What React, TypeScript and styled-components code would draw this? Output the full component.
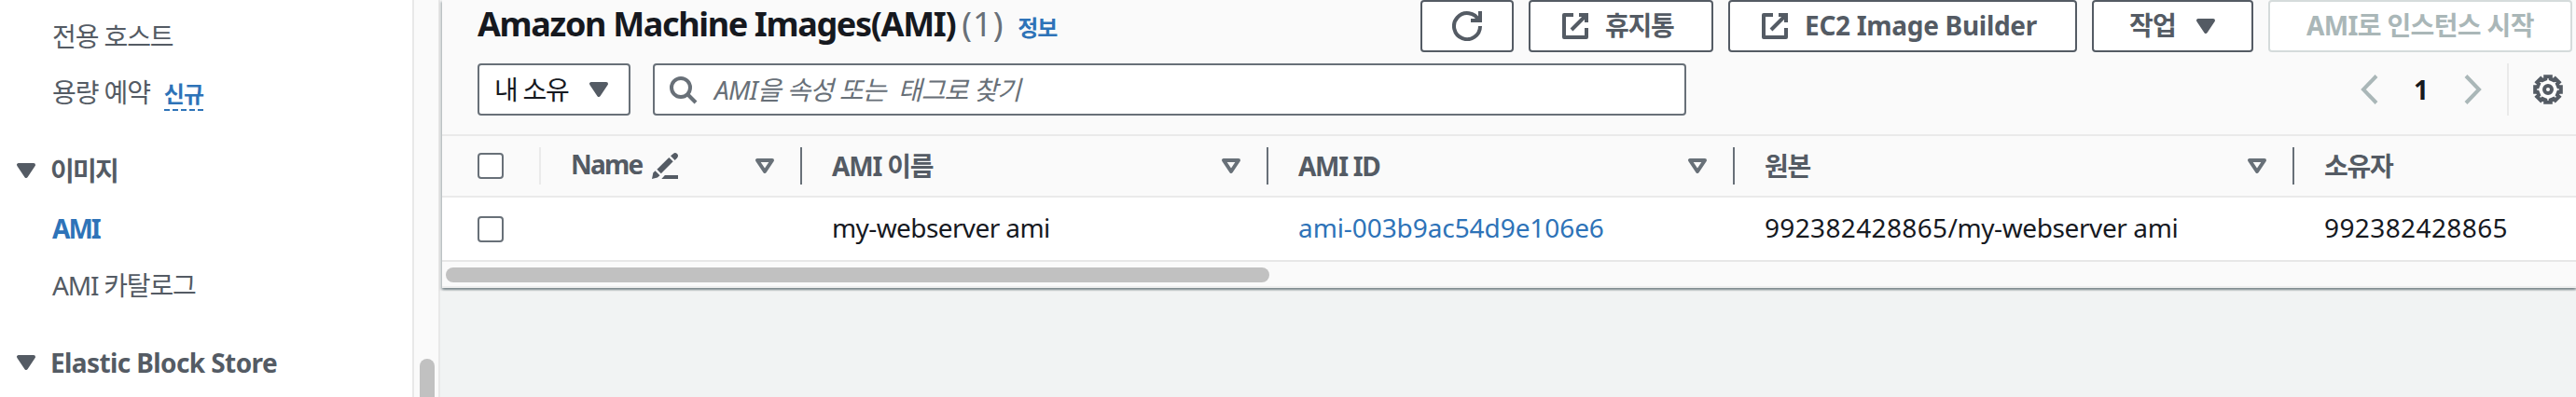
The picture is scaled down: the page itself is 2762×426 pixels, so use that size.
import React from "react";
import styled, { createGlobalStyle } from "styled-components";

const ink = "#16191f";
const slate = "#545b64";
const muted = "#687078";
const link = "#2e73b8";
const hairline = "#eaeaea";
const disabled = "#aab7b8";

const GlobalStyle = createGlobalStyle`
  * { box-sizing: border-box; }
  body {
    margin: 0;
    overflow: hidden;
    background: #f1f3f3;
    color: ${ink};
    font-family: "Noto Sans", "Noto Sans CJK KR", sans-serif;
    font-size: 28px;
  }
  svg { display: block; flex: none; }
`;

const Text = styled.span<{ $track?: number }>`
  white-space: pre;
  letter-spacing: ${(p) => p.$track ?? 0}px;
`;

const Page = styled.div`
  display: flex;
  width: 2762px;
  height: 426px;
  overflow: hidden;
`;

/* Side navigation */
const Sidebar = styled.nav`
  flex: none;
  width: 442px;
  padding-top: 8px;
  background: #fff;
  color: ${slate};
`;

const NavItem = styled.div<{ $active?: boolean }>`
  display: flex;
  height: 60px;
  padding-left: 56px;
  line-height: ${(p) => (p.$active ? 60 : 62)}px;
  font-weight: ${(p) => (p.$active ? 700 : 400)};
  color: ${(p) => (p.$active ? link : slate)};
`;

const NavSection = styled.div<{ $gap: number }>`
  display: flex;
  align-items: center;
  gap: 10px;
  height: 64px;
  margin-top: ${(p) => p.$gap}px;
  padding-left: 12px;
  line-height: 64px;
  font-weight: 700;
`;

const NewTag = styled.span`
  align-self: flex-start;
  width: 42px;
  height: 37px;
  margin: 14px 0 0 15px;
  line-height: 38px;
  font-size: 24px;
  font-weight: 700;
  color: ${link};
`;

const DashRule = styled.div`
  height: 2px;
  margin-top: -3px;
  background: repeating-linear-gradient(90deg, ${link} 0 6px, transparent 6px 9px);
`;

const TagLabel = styled(Text)`
  display: block;
`;

const NavScrollbar = styled.div`
  flex: none;
  width: 30px;
  padding: 385px 4px 0 6px;
  background: #fafafa;
  border: solid #e8e8e8;
  border-width: 0 2px;
  overflow: hidden;
`;

const NavThumb = styled.div`
  width: 16px;
  height: 80px;
  border-radius: 8px;
  background: #c1c1c1;
`;

/* Table card */
const Main = styled.main`
  flex: 1;
  min-width: 0;
  padding-left: 2px;
`;

const Card = styled.section`
  height: 309px;
  background: #fafafa;
  box-shadow: 0 2px 2px 0 rgba(0, 28, 36, 0.3), 2px 2px 2px 0 rgba(0, 28, 36, 0.15),
    -2px 2px 2px 0 rgba(0, 28, 36, 0.15);
`;

const Header = styled.header`
  height: 146px;
  padding: 0 4px 0 38px;
  border-bottom: 2px solid ${hairline};
`;

const TitleRow = styled.div`
  display: flex;
  justify-content: space-between;
  height: 56px;
`;

const Title = styled.h2`
  display: flex;
  align-items: baseline;
  height: 52px;
  margin: 0;
  font-size: 36px;
  line-height: 51px;
  font-weight: 700;
`;

const Count = styled.span`
  width: 67px;
  padding-left: 7px;
  font-weight: 400;
  letter-spacing: 1px;
  color: ${muted};
`;

const InfoLink = styled.a`
  font-size: 24px;
  letter-spacing: -1px;
  color: ${link};
`;

const Actions = styled.div`
  display: flex;
  gap: 16px;
`;

const Button = styled.button<{ $width: number; $pad?: number; $off?: boolean }>`
  display: flex;
  align-items: center;
  gap: 16px;
  width: ${(p) => p.$width}px;
  height: 56px;
  padding: 0 0 0 ${(p) => p.$pad ?? 32}px;
  border: 2px solid ${(p) => (p.$off ? "#d5dbdb" : slate)};
  border-radius: 4px;
  background: #fff;
  color: ${(p) => (p.$off ? disabled : slate)};
  font: inherit;
  font-weight: 700;
  line-height: 50px;
`;

const ButtonLabel = styled(Text)`
  height: 52px;
  line-height: 51px;
`;

const FilterRow = styled.div`
  display: flex;
  gap: 24px;
  height: 56px;
  margin-top: 12px;
`;

const Field = styled.div<{ $width: number }>`
  display: flex;
  align-items: center;
  width: ${(p) => p.$width}px;
  padding: 0 14px 0 16px;
  border: 2px solid ${muted};
  border-radius: 4px;
  background: #fff;
  line-height: 52px;
`;

const OwnerField = styled(Field)`
  justify-content: space-between;
  padding-right: 16px;
  svg { color: ${slate}; }
`;

const SearchField = styled(Field)`
  gap: 18px;
  padding-left: 14px;
  color: ${muted};
  font-style: italic;
`;

const Pager = styled.div`
  display: flex;
  align-items: center;
  margin-left: auto;
  color: ${disabled};
`;

const PageNumber = styled.span`
  width: 92px;
  text-align: center;
  font-weight: 700;
  line-height: 54px;
  color: ${ink};
`;

const Settings = styled.div`
  display: flex;
  align-items: center;
  height: 56px;
  margin-left: 26px;
  padding: 0 10px 0 26px;
  border-left: 2px solid ${hairline};
  color: ${slate};
`;

const Row = styled.div<{ $head?: boolean }>`
  display: grid;
  grid-template-columns: 106px 280px 500px 500px 600px 302px;
  height: ${(p) => (p.$head ? 66 : 69)}px;
  border-bottom: 2px solid ${(p) => (p.$head ? hairline : "#e7e7e7")};
  background: ${(p) => (p.$head ? "#fafafa" : "#fff")};
  color: ${(p) => (p.$head ? slate : ink)};
  font-weight: ${(p) => (p.$head ? 700 : 400)};
  line-height: ${(p) => (p.$head ? 64 : 65)}px;
`;

const Cell = styled.div<{ $rule?: string }>`
  display: flex;
  align-items: center;
  padding: 0 24px 0 32px;
  background: ${(p) => (p.$rule ? `linear-gradient(${p.$rule}, ${p.$rule}) right center / 2px 40px no-repeat` : "none")};
`;

const ValueCell = styled(Cell)`
  align-items: flex-start;
`;

const CheckCell = styled(Cell)`
  padding-left: 38px;
`;

const Checkbox = styled.div`
  width: 28px;
  height: 28px;
  border: 2px solid ${muted};
  border-radius: 4px;
  background: #fff;
`;

const NameLabel = styled(Text)`
  height: 64px;
  line-height: 60px;
`;

const IdLink = styled(Text)`
  color: ${link};
`;

const SortSlot = styled.span`
  margin-left: auto;
  color: ${muted};
`;

const PencilSlot = styled.span`
  margin-left: 11px;
`;

const TableScrollbar = styled.div`
  height: 28px;
  padding: 6px 0 0 4px;
  border-bottom: 2px solid #eeeeee;
`;

const TableThumb = styled.div`
  width: 883px;
  height: 16px;
  border-radius: 8px;
  background: #c1c1c1;
`;

/* Icons */
const Icon = ({ children, fill = "none" }: { children: React.ReactNode; fill?: string }) => (
  <svg width="32" height="32" viewBox="0 0 16 16" fill={fill} stroke="currentColor" strokeWidth="2">
    {children}
  </svg>
);

const Caret = ({ hollow }: { hollow?: boolean }) => (
  <Icon fill={hollow ? "none" : "currentColor"}>
    <path d="M4 5h8l-4 6z" strokeLinejoin="round" />
  </Icon>
);

const Refresh = () => (
  <Icon>
    <path d="M10 5h5V0" />
    <path d="M15 8a7 7 0 1 1-.7-3" />
  </Icon>
);

const External = () => (
  <Icon>
    <path d="M10 2h4v4M6 10l8-8" />
    <path d="M14 9v5H2V2h5" strokeLinejoin="round" />
  </Icon>
);

const Search = () => (
  <Icon>
    <circle cx="7" cy="7" r="5" />
    <path d="M15 15l-4.5-4.5" />
  </Icon>
);

const Pencil = () => (
  <svg width="28" height="28" viewBox="0 0 28 28" fill="currentColor">
    <path d="M0 28l1.3-6.5 2.2-2.2 5 5-2.6 2.2z" />
    <path d="M5.4 17.8L18.3 4.9l4.4 4.4L9.8 22.2z" />
    <path d="M20 3.3L22.8.9Q25-.9 27 1q1.9 2 .2 4.2l-2.6 2.7z" />
    <path d="M10.3 28l3.6-4H28v4z" />
  </svg>
);

const gearOutline =
  Array.from({ length: 8 }, (_, i) =>
    [
      [-0.2, 7.05],
      [0.2, 7.05],
      [0.24, 5.8],
      [0.545, 5.8],
    ].map(([offset, radius]) => {
      const angle = (i * Math.PI) / 4 + offset;
      return `${(8 + radius * Math.sin(angle)).toFixed(2)} ${(8 - radius * Math.cos(angle)).toFixed(2)}`;
    })
  )
    .flat()
    .map((point, i) => (i ? "L" : "M") + point)
    .join("") + "z";

const Gear = () => (
  <Icon>
    <path d={gearOutline} fill="#fff" />
    <circle cx="8" cy="8" r="2" />
  </Icon>
);

const Chevron = ({ d }: { d: string }) => (
  <svg width="20" height="32" viewBox="0 0 20 32" fill="none" stroke="currentColor" strokeWidth="4">
    <path d={d} />
  </svg>
);

const columns = [
  { label: "AMI 이름", track: -1.2, rule: muted },
  { label: "AMI ID", track: -1.3, rule: muted },
  { label: "원본", track: -1.2, rule: muted },
  { label: "소유자", track: -1.2 },
];

export default function App() {
  return (
    <>
      <GlobalStyle />
      <Page>
        <Sidebar>
          <NavItem><Text $track={-1.1}>전용 호스트</Text></NavItem>
          <NavItem>
            <Text $track={-1.1}>용량 예약</Text>
            <NewTag><TagLabel $track={-1}>신규</TagLabel><DashRule /></NewTag>
          </NavItem>
          <NavSection $gap={23}><Caret /><Text $track={-1.7}>이미지</Text></NavSection>
          <NavItem $active><Text $track={-2}>AMI</Text></NavItem>
          <NavItem><Text $track={-1.2}>AMI 카탈로그</Text></NavItem>
          <NavSection $gap={22}><Caret /><Text $track={-0.6}>Elastic Block Store</Text></NavSection>
        </Sidebar>
        <NavScrollbar><NavThumb /></NavScrollbar>
        <Main>
          <Card>
            <Header>
              <TitleRow>
                <Title>
                  <Text $track={-1.35}>Amazon Machine Images(AMI)</Text>
                  <Count>(1)</Count>
                  <InfoLink>정보</InfoLink>
                </Title>
                <Actions>
                  <Button $width={100}><Refresh /></Button>
                  <Button $width={198}><External /><ButtonLabel $track={-1.2}>휴지통</ButtonLabel></Button>
                  <Button $width={374}><External /><ButtonLabel $track={-0.3}>EC2 Image Builder</ButtonLabel></Button>
                  <Button $width={173} $pad={38}><ButtonLabel $track={-0.8}>작업</ButtonLabel><Caret /></Button>
                  <Button $width={326} $pad={39} $off><ButtonLabel $track={-0.65}>AMI로 인스턴스 시작</ButtonLabel></Button>
                </Actions>
              </TitleRow>
              <FilterRow>
                <OwnerField $width={164}><Text $track={-1.3}>내 소유</Text><Caret /></OwnerField>
                <SearchField $width={1108}><Search /><Text $track={-0.8}>AMI을 속성 또는  태그로 찾기</Text></SearchField>
                <Pager>
                  <Chevron d="M18 1.5L4 16l14 14.5" />
                  <PageNumber>1</PageNumber>
                  <Chevron d="M2 1.5L16 16 2 30.5" />
                  <Settings><Gear /></Settings>
                </Pager>
              </FilterRow>
            </Header>
            <Row $head>
              <CheckCell $rule={hairline}><Checkbox /></CheckCell>
              <Cell $rule={muted}>
                <NameLabel $track={-1.8}>Name</NameLabel>
                <PencilSlot><Pencil /></PencilSlot>
                <SortSlot><Caret hollow /></SortSlot>
              </Cell>
              {columns.map((c) => (
                <Cell key={c.label} $rule={c.rule}>
                  <Text $track={c.track}>{c.label}</Text>
                  {c.rule && <SortSlot><Caret hollow /></SortSlot>}
                </Cell>
              ))}
            </Row>
            <Row>
              <CheckCell><Checkbox /></CheckCell>
              <ValueCell />
              <ValueCell><Text $track={-0.6}>my-webserver ami</Text></ValueCell>
              <ValueCell><IdLink $track={-0.08}>ami-003b9ac54d9e106e6</IdLink></ValueCell>
              <ValueCell><Text $track={0.35}>992382428865</Text><Text $track={-0.4}>/my-webserver ami</Text></ValueCell>
              <ValueCell><Text $track={0.4}>992382428865</Text></ValueCell>
            </Row>
            <TableScrollbar><TableThumb /></TableScrollbar>
          </Card>
        </Main>
      </Page>
    </>
  );
}
